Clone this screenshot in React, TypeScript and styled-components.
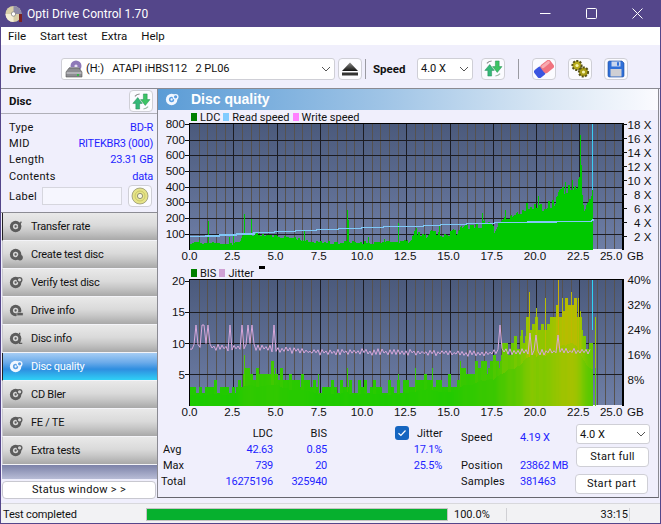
import React from "react";
import styled, { createGlobalStyle } from "styled-components";

const UI = `"Roboto", "Noto Sans", "Liberation Sans", sans-serif`;

const Global = createGlobalStyle`
  html, body { margin: 0; padding: 0; background: #54468a; }
  * { box-sizing: border-box; }
  #root { width: 661px; height: 524px; overflow: hidden; }
`;

/* ---------- data for the charts ---------- */
function rng(seed: number) {
  return () => {
    seed = (seed + 0x6d2b79f5) | 0;
    let t = Math.imul(seed ^ (seed >>> 15), 1 | seed);
    t = (t + Math.imul(t ^ (t >>> 7), 61 | t)) ^ t;
    return ((t ^ (t >>> 14)) >>> 0) / 4294967296;
  };
}
function interp(pts: number[][], x: number) {
  if (x <= pts[0][0]) return pts[0][1];
  for (let i = 1; i < pts.length; i++) {
    if (x <= pts[i][0]) {
      const [a, b] = pts[i - 1];
      const [c, d] = pts[i];
      return b + ((d - b) * (x - a)) / (c - a || 1);
    }
  }
  return pts[pts.length - 1][1];
}
const X0 = 190;
const PX = 17.3;
const COLS = 403;
const gbx = (g: number) => X0 + g * PX;

const ldcEnv = [[0,5],[.2,7],[1,6.5],[2.4,6],[2.9,8],[3.05,15],[4,15],[5,13],[6.3,11],[6.6,8],[8,7],[10,7],[12,7.5],[12.5,8],[12.8,12],[13,16],[13.5,13],[14,19],[14.4,15],[15,16],[15.5,19],[16,24],[17.3,25],[17.55,19],[17.8,26],[18.2,33],[19,36],[19.6,43],[20.8,45],[21,46],[21.4,58],[22.4,66],[22.55,70],[22.75,37],[23,45],[23.2,56],[23.45,58]];
const ldcSpikes: Record<number, number> = { .5:10, 1.02:29, 2.25:13, 2.5:15, 3.1:36, 3.52:31, 6.6:19, 9.1:40, 9.16:30, 10.3:13, 11.2:11, 12:27, 13.05:22, 14.4:24, 16.9:37, 17:30, 18.2:40, 19.5:47, 20.1:54, 21.7:68, 22.1:70, 22.55:115, 22.62:85 };
const ldc: number[] = [];
{
  const r = rng(11);
  let hold = 0;
  for (let i = 0; i < COLS; i++) {
    const g = i / PX;
    const e = interp(ldcEnv, g);
    if (i % 2 === 0) hold = (r() - 0.5) * (g > 19 ? 11 : g > 12.5 ? 7 : 3);
    ldc.push(Math.max(2, e + hold));
  }
  Object.entries(ldcSpikes).forEach(([g, h]) => {
    ldc[Math.round(+g * PX)] = h;
  });
}
const ldcPath = ldc.map((h, i) => `M${X0 + i} 249.5v${-h}h1v${h}z`).join("");

const readPts = [[0,236.8],[.9,236],[1.7,235],[2.7,234],[3.7,232.8],[4.9,231.8],[6.1,230.6],[7.3,229.6],[8.6,228.6],[9.9,227.6],[11.2,226.5],[13.5,225.7],[14.5,224.6],[16,223.8],[17.6,222.8],[19.5,222],[21.2,221.3],[23.2,220.3],[23.3,219]];
const readPath = readPts.map(([g, y], i) => (i === 0 ? `M${gbx(g)} ${y}` : `H${gbx(g)}V${y}`)).join("");

const bisEnv = [[0,2.5],[3,3],[3.05,5.5],[5,5.5],[5.5,4.5],[6.6,4],[7,3],[13,3],[14,4],[15.5,4],[15.6,5],[16.5,6],[17.4,6.5],[17.9,7],[18,10],[19,10],[19.5,13],[20.9,13],[21,15],[22.5,16],[22.7,10.5],[23.3,11],[23.45,11]];
const bisSpikes: Record<number, number> = { 3.1:8, 4.9:6, 7.4:5, 9.1:6, 12:5, 13:6, 14:6, 15.6:7, 19.6:18, 20:15.5, 20.5:17, 21.25:20, 21.5:17, 22:18, 22.4:17, 23.42:14 };
const bis: number[] = [];
{
  const r = rng(5);
  let hold = 3;
  for (let i = 0; i < COLS; i++) {
    const g = i / PX;
    const e = interp(bisEnv, g);
    if (i % 3 === 0) hold = (r() - 0.5) * (g > 18 ? 3.5 : 2.2);
    bis.push(Math.max(1, Math.round(e + hold)));
  }
  Object.entries(bisSpikes).forEach(([g, h]) => {
    bis[Math.round(+g * PX)] = h;
  });
}
function mix(t: number) {
  const stops = [[0,[10,204,0]],[.33,[60,200,0]],[.6,[130,200,0]],[.8,[176,192,0]],[1,[205,175,0]]] as [number, number[]][];
  const v = Math.min(1, Math.max(0, t));
  for (let i = 1; i < stops.length; i++) {
    if (v <= stops[i][0]) {
      const f = (v - stops[i - 1][0]) / (stops[i][0] - stops[i - 1][0]);
      const a = stops[i - 1][1];
      const b = stops[i][1];
      return `rgb(${a.map((c, k) => Math.round(c + (b[k] - c) * f)).join(",")})`;
    }
  }
  return "rgb(205,175,0)";
}
const UNIT = 6.3;
const bisBars = bis.map((h, i) => {
  let s = 0;
  let n = 0;
  for (let k = Math.max(0, i - 6); k <= Math.min(COLS - 1, i + 6); k++) {
    s += bis[k];
    n++;
  }
  const avg = s / n;
  return { x: X0 + i, h: h * UNIT, low: Math.min(h, avg * 0.6) * UNIT, top: mix(Math.max(h, avg) / 20), bottom: mix(avg / 22) };
});

const jitPts: string[] = [];
{
  const r = rng(23);
  const spikes: Record<number, number> = { .4:325, .7:325, .8:325, 1.02:325, 2.3:325, 3.0:325, 3.3:325, 3.55:325, 4.9:325, 17.9:325, 19.6:333, 20:335, 21.3:335 };
  const base = [[0,350],[.3,346],[1.5,347],[2.4,349],[3,346],[5,349],[7,352],[10,352],[13,352],[17,354],[17.8,352],[18,351],[20,352],[23.3,351]];
  const spikeAt: Record<number, number> = {};
  Object.entries(spikes).forEach(([g, y]) => { spikeAt[Math.round(+g * PX / 2)] = y; });
  const n = Math.floor((23.3 * PX) / 2);
  for (let i = 0; i < n; i++) {
    const g = (i * 2) / PX;
    const zig = (i % 2 ? 1 : -1) * (0.6 + r() * 2.8);
    const y = spikeAt[i] ?? interp(base, g) + zig;
    jitPts.push(`${X0 + i * 2},${y.toFixed(1)}`);
  }
}

/* ---------- layout ---------- */
const Windowed = styled.div`
  width: 661px;
  height: 524px;
  display: flex;
  flex-direction: column;
  background: #f0effc;
  border: 1px solid #54468a;
  border-top: 0;
  font: 11px ${UI};
  color: #111;
`;
const TitleBar = styled.div`
  height: 27px;
  margin: 0 -1px;
  background: #54468a;
  color: #fff;
  display: flex;
  align-items: center;
  padding: 0 1px 0 5px;
  flex: none;
`;
const TitleText = styled.span`
  margin-left: 4px;
  font-size: 12px;
  letter-spacing: 0.05px;
  flex: 1;
`;
const WinBtn = styled.span`
  width: 46px;
  height: 27px;
  display: flex;
  align-items: center;
  justify-content: center;
`;
const MenuBar = styled.div`
  height: 18px;
  background: #fff;
  display: flex;
  align-items: center;
  padding-left: 7px;
  gap: 14px;
  flex: none;
`;
const MenuItem = styled.span`
  font-size: 11.5px;
`;
const Toolbar = styled.div`
  height: 43px;
  display: flex;
  align-items: center;
  padding: 4px 0 0 8px;
  flex: none;
`;
const BoldLabel = styled.span<{ $w: number }>`
  width: ${(p) => p.$w}px;
  font-weight: 700;
  font-size: 11.5px;
  flex: none;
`;
const Combo = styled.div<{ $w: number; $h?: number }>`
  width: ${(p) => p.$w}px;
  height: ${(p) => p.$h ?? 22}px;
  flex: none;
  background: #fff;
  border: 1px solid #cfcfd6;
  border-radius: 3px;
  display: flex;
  align-items: center;
  padding: 0 3px 0 3px;
  gap: 3px;
`;
const ComboText = styled.span`
  flex: 1;
  white-space: pre;
`;
const IconBtn = styled.button<{ $ml?: number }>`
  width: 24px;
  height: 22px;
  flex: none;
  margin-left: ${(p) => p.$ml ?? 0}px;
  padding: 0;
  background: #fbfbff;
  border: 1px solid #cfcfd6;
  border-radius: 4px;
  display: flex;
  align-items: center;
  justify-content: center;
`;
const VSep = styled.span<{ $ml: number; $mr: number }>`
  width: 1px;
  height: 20px;
  flex: none;
  margin: 0 ${(p) => p.$mr}px 0 ${(p) => p.$ml}px;
  background: #9a9aa2;
`;
const Body = styled.div`
  flex: 1;
  display: flex;
  min-height: 0;
  border-top: 1px solid #8a8a92;
`;
const Sidebar = styled.div`
  width: 156px;
  flex: none;
  display: flex;
  flex-direction: column;
`;
const DiscHead = styled.div`
  height: 25px;
  padding: 0 4px 0 8px;
  display: flex;
  align-items: center;
  justify-content: space-between;
  border-bottom: 1px solid #b0b0b8;
`;
const DiscGrid = styled.div`
  display: grid;
  grid-template-columns: auto 1fr;
  grid-auto-rows: 16.4px;
  align-items: center;
  padding: 5px 4px 0 8px;
  letter-spacing: 0.3px;
`;
const Blue = styled.span<{ $right?: boolean }>`
  color: #1f1fff;
  letter-spacing: -0.25px;
  ${(p) => (p.$right ? "text-align: right;" : "")}
`;
const LabelRow = styled.div`
  display: flex;
  align-items: center;
  padding: 0 4px 3px 8px;
  height: 26px;
  letter-spacing: 0.3px;
`;
const LabelInput = styled.div`
  width: 80px;
  height: 18px;
  margin: 0 6px 0 5px;
  background: #f6f6fe;
  border: 1px solid #d6d6de;
`;
const NavList = styled.div`
  display: flex;
  flex-direction: column;
  margin-top: 1px;
  border-top: 1px solid #8c8c94;
`;
const NavButton = styled.div<{ $active?: boolean; $edge?: boolean }>`
  height: 28px;
  margin-left: 1px;
  display: flex;
  align-items: center;
  gap: 7px;
  padding-left: 6px;
  letter-spacing: -0.25px;
  border-left: 1px solid ${(p) => (p.$edge ? "#222" : "#c8c8cc")};
  border-bottom: 1px solid #f4f4f8;
  color: ${(p) => (p.$active ? "#fff" : "#111")};
  background: ${(p) =>
    p.$active
      ? "linear-gradient(#a6cdf4 0%, #6cabea 35%, #2f8ee0 60%, #2fd0f6 100%)"
      : "linear-gradient(#e9e9e9 0%, #dadada 45%, #c6c6c6 70%, #a8a8a8 100%)"};
`;
const NavFill = styled.div`
  height: 14px;
  margin-left: 1px;
  background: linear-gradient(#7c82a8, #b8bcd6);
`;
const StatusBtn = styled.div`
  height: 18px;
  margin: 2px 1px 0 1px;
  background: #fff;
  border: 1px solid #c8c8d0;
  border-radius: 4px;
  text-align: center;
  line-height: 16px;
  letter-spacing: 0.3px;
`;
const Main = styled.div`
  flex: 1;
  min-width: 0;
  margin: 0 1px 5px 0;
  border-left: 1px solid #8a8a92;
  border-right: 1px solid #8a8a92;
  border-bottom: 1px solid #66666e;
  display: flex;
  flex-direction: column;
`;
const Header = styled.div`
  height: 21px;
  flex: none;
  display: flex;
  align-items: center;
  gap: 11px;
  padding: 0 0 1px 7px;
  color: #fff;
  font-weight: 700;
  font-size: 14px;
  font-family: "Liberation Sans", sans-serif;
  background: linear-gradient(90deg, #5b9cd6 0%, #9fc4e6 45%, #d9e7f4 78%, #fbfbff 100%);
`;
const Legend = styled.div<{ $mt?: number }>`
  height: 13px;
  flex: none;
  margin-top: ${(p) => p.$mt ?? 0}px;
  display: flex;
  align-items: center;
  padding: 1px 0 0 33px;
`;
const Swatch = styled.span<{ $c: string }>`
  width: 6px;
  height: 8px;
  background: ${(p) => p.$c};
  margin-right: 3px;
`;
const LegendText = styled.span`
  margin-right: 3px;
`;
const FlatMark = styled.span`
  width: 6px;
  height: 3px;
  background: #000;
  margin: -11px 0 0 2px;
`;
const ChartSvg = styled.svg`
  display: block;
  flex: none;
  overflow: visible;
  text {
    font: 11.6px "Liberation Sans", sans-serif;
    fill: #111;
  }
`;
const Stats = styled.div`
  flex: 1;
  display: flex;
  padding: 4px 0 0 3px;
`;
const StatTable = styled.div`
  width: 166px;
  flex: none;
  display: grid;
  grid-template-columns: 40px 72px 54px;
  grid-auto-rows: 16px;
  align-items: center;
`;
const Cell = styled.span<{ $blue?: boolean; $right?: boolean; $indent?: number }>`
  color: ${(p) => (p.$blue ? "#1f1fff" : "#111")};
  text-align: ${(p) => (p.$right ? "right" : "left")};
  padding-left: ${(p) => p.$indent ?? 0}px;
  ${(p) => (p.$blue ? "letter-spacing: -0.25px;" : "")}
`;
const JitterCol = styled.div`
  width: 47px;
  flex: none;
  margin-left: 68px;
  display: grid;
  grid-auto-rows: 16px;
  align-items: center;
  justify-items: end;
`;
const CheckRow = styled.div`
  width: 75px;
  margin-right: -28px;
  display: flex;
  align-items: center;
  gap: 8px;
  justify-self: start;
`;
const CheckBox = styled.span`
  width: 14px;
  height: 14px;
  background: #1565c0;
  border-radius: 3px;
  display: flex;
  align-items: center;
  justify-content: center;
`;
const InfoGrid = styled.div`
  width: 115px;
  flex: none;
  margin-left: 19px;
  padding-top: 4px;
  display: grid;
  grid-template-columns: 59px 1fr;
  grid-template-rows: 16px 12px 16px 16px;
  align-items: center;
  white-space: nowrap;
  letter-spacing: 0.2px;
`;
const Actions = styled.div`
  width: 74px;
  flex: none;
  margin-top: -1px;
  display: flex;
  flex-direction: column;
`;
const ActionBtn = styled.div<{ $mt: number; $ml?: number }>`
  width: 73px;
  height: 20px;
  margin: ${(p) => p.$mt}px 0 0 ${(p) => p.$ml ?? 0}px;
  background: #fff;
  border: 1px solid #cfcfd6;
  border-radius: 4px;
  text-align: center;
  line-height: 18px;
  letter-spacing: 0.3px;
`;
const StatusBar = styled.div`
  height: 20px;
  flex: none;
  background: #f2f2f4;
  border-top: 1px solid #d8d8dc;
  display: flex;
  align-items: center;
  padding: 2px 0 0 2px;
`;
const StatusText = styled.span`
  width: 143px;
  flex: none;
  letter-spacing: -0.15px;
`;
const Progress = styled.div`
  width: 302px;
  height: 13px;
  flex: none;
  background: #dadada;
  border: 1px solid #c4c4c4;
`;
const ProgressFill = styled.div`
  height: 100%;
  background: #06b02e;
`;
const Percent = styled.span`
  width: 53px;
  flex: none;
  margin-left: 6px;
  border-right: 1px solid #d0d0d4;
`;
const TimeText = styled.span`
  width: 123px;
  flex: none;
  text-align: right;
  padding-right: 1px;
  border-right: 1px solid #d0d0d4;
`;

/* ---------- drawn icons ---------- */
const Chevron = () => (
  <svg width="10" height="6" viewBox="0 0 10 6"><path d="M1 1l4 4 4-4" fill="none" stroke="#555" strokeWidth="1" /></svg>
);
const AppIcon = () => (
  <svg width="18" height="18" viewBox="0 0 18 18">
    <circle cx="8.5" cy="9" r="8" fill="#d8cfa8" />
    <path d="M8.5 1a8 8 0 0 1 8 8H8.5z" fill="#8d8aa8" />
    <path d="M8.5 9h-8a8 8 0 0 0 8 8z" fill="#f4eed6" />
    <circle cx="8.5" cy="9" r="2.2" fill="#fff" stroke="#777" strokeWidth=".7" />
    <rect x="14" y="9" width="3" height="8" fill="#7a2020" />
  </svg>
);
const DriveIcon = () => (
  <svg width="18" height="18" viewBox="0 0 18 18">
    <circle cx="11" cy="6" r="5.5" fill="#8e79b8" />
    <circle cx="11" cy="6" r="1.6" fill="#e8e0f6" />
    <path d="M4 7h10v2H4z" fill="#b8b8c0" />
    <path d="M4 8L1 12v5h16v-5l-3-4z" fill="#8d8d92" stroke="#555" strokeWidth=".6" />
    <rect x="1.5" y="12.5" width="15" height="1" fill="#d8d8dc" />
    <circle cx="13" cy="15" r="1.1" fill="#26c23a" />
  </svg>
);
const RefreshIcon = () => (
  <svg width="19" height="17" viewBox="0 0 20 18">
    <path d="M3 3.500a7 7 0 0 1 5-2.500" fill="none" stroke="#8a8a8a" strokeWidth="1.200" />
    <path d="M17 14.500a7 7 0 0 1-5 2.500" fill="none" stroke="#9ab8a4" strokeWidth="1.200" />
    <path d="M4 17v-6H.8L6 4.800 10.800 11H8v6z" fill="#34b878" stroke="#1d8450" strokeWidth=".5" />
    <path d="M12 1v6H9l5 6.200L19 7h-3V1z" fill="#3cc464" stroke="#1d8450" strokeWidth=".5" />
  </svg>
);
const EjectIcon = () => (
  <svg width="18" height="16" viewBox="0 0 18 16">
    <defs><linearGradient id="ej" x1="0" y1="0" x2="0" y2="1"><stop offset="0" stopColor="#8a8a8a" /><stop offset="1" stopColor="#111" /></linearGradient></defs>
    <path d="M9 1.500L17 10H1z" fill="url(#ej)" />
    <rect x="1" y="11.500" width="16" height="3" fill="#333" />
  </svg>
);
const EraserIcon = () => (
  <svg width="20" height="18" viewBox="0 0 20 18">
    <g transform="rotate(-38 10 9)">
      <rect x="0" y="4" width="9" height="10" rx="2.500" fill="#3b55e0" />
      <rect x="8" y="4" width="12" height="10" rx="2.500" fill="#f0737f" />
      <rect x="9" y="5" width="10" height="3" rx="1.500" fill="#f8aab0" />
    </g>
  </svg>
);
const GearsIcon = () => (
  <svg width="20" height="19" viewBox="0 0 20 19">
    <circle cx="7" cy="6.500" r="4.600" fill="#b9ad1c" stroke="#55501a" strokeWidth="2" strokeDasharray="2 1.400" />
    <circle cx="7" cy="6.500" r="1.600" fill="#f6f4b0" />
    <circle cx="13.500" cy="13" r="4.600" fill="#a89c16" stroke="#55501a" strokeWidth="2" strokeDasharray="2 1.400" />
    <circle cx="13.500" cy="13" r="1.600" fill="#f6f4b0" />
  </svg>
);
const SaveIcon = () => (
  <svg width="18" height="18" viewBox="0 0 18 18">
    <path d="M1 2.500A1.500 1.500 0 0 1 2.500 1H15l2 2v12.500a1.500 1.500 0 0 1-1.500 1.500h-13A1.500 1.500 0 0 1 1 15.500z" fill="#2f6fd8" stroke="#1c4aa0" strokeWidth=".6" />
    <rect x="4.500" y="1.500" width="9" height="5" fill="#c9d6ee" />
    <rect x="10" y="2.200" width="2" height="3.500" fill="#2f6fd8" />
    <rect x="3.500" y="9" width="11" height="7.500" fill="#cfcfd4" />
  </svg>
);
const CdIcon = () => (
  <svg width="18" height="18" viewBox="0 0 18 18">
    <circle cx="9" cy="9" r="8" fill="#e6e488" stroke="#87876a" strokeWidth=".7" />
    <circle cx="9" cy="9" r="5" fill="none" stroke="#c2bf62" strokeWidth=".8" />
    <circle cx="9" cy="9" r="2.600" fill="#f8f8e4" stroke="#7a7a62" strokeWidth=".8" />
  </svg>
);
const NavIcon = ({ kind, light }: { kind: string; light?: boolean }) => {
  const c = light ? "#f2f7ff" : "#5c5c5c";
  const hole = light ? "#5a9fe4" : "#d6d6d6";
  return (
    <svg width="15" height="15" viewBox="0 0 17 17" style={{ flex: "none" }}>
      <circle cx="7.500" cy="8.500" r="6.500" fill={c} />
      <circle cx="7.500" cy="8.500" r="3" fill={hole} />
      <circle cx="7.500" cy="8.500" r="1.300" fill={c} />
      {kind === "bolt" && <path d="M14 3l-3 5h2l-2 5" fill="none" stroke={c} strokeWidth="1.400" />}
      {kind === "drop" && <circle cx="12.500" cy="12" r="3.200" fill={c} />}
      {kind === "gear" && <circle cx="12" cy="5.500" r="2.600" fill={hole} stroke={c} strokeWidth="1.500" />}
      {kind === "bar" && <rect x="9" y="11" width="7" height="3.500" fill={c} stroke={hole} strokeWidth=".6" />}
      {kind === "info" && <path d="M12 2v2M12 6v8h3" stroke={c} strokeWidth="1.500" fill="none" />}
    </svg>
  );
};

/* ---------- charts ---------- */
const xLabels = ["0.0", "2.5", "5.0", "7.5", "10.0", "12.5", "15.0", "17.5", "20.0", "22.5"];
const PlotFrame = ({ id, top, bottom, hLines }: { id: string; top: number; bottom: number; hLines: number[] }) => {
  const minors: number[] = [];
  const majors: number[] = [];
  for (let i = 1; i <= 50; i++) (i % 5 === 0 ? majors : minors).push(Math.round(X0 + i * 8.65) + 0.5);
  return (
    <>
      <defs>
        <linearGradient id={id} x1="0" y1="0" x2="0" y2="1">
          <stop offset="0" stopColor="#4b5a7c" />
          <stop offset="1" stopColor="#6e7ea6" />
        </linearGradient>
      </defs>
      <rect x={X0} y={top} width={433} height={bottom - top} fill={`url(#${id})`} />
      {minors.map((x) => <line key={x} x1={x} x2={x} y1={top} y2={bottom} stroke="#56524f" />)}
      {hLines.map((y) => <line key={y} x1={X0} x2={623} y1={y + 0.5} y2={y + 0.5} stroke="#1c1c22" />)}
      {majors.map((x) => <line key={x} x1={x} x2={x} y1={top} y2={bottom} stroke="#1c1c22" />)}
    </>
  );
};
const PlotBorder = ({ top, bottom }: { top: number; bottom: number }) => (
  <path d={`M189.500 ${bottom}V${top - 0.5}H623V${bottom}`} fill="none" stroke="#000" strokeWidth="1.500" />
);
const XAxis = ({ bottom }: { bottom: number }) => (
  <>
    {xLabels.map((t, i) => (
      <text key={t} x={gbx(i * 2.5) - (i === 0 ? 0.5 : 1)} y={bottom + 11} textAnchor="middle">{t}</text>
    ))}
    <text x={622.500} y={bottom + 11} textAnchor="end">25.0</text>
    <text x={627} y={bottom + 11}>GB</text>
  </>
);

const TopChart = () => {
  const left = [800, 700, 600, 500, 400, 300, 200, 100];
  const right = [18, 16, 14, 12, 10, 8, 6, 4, 2];
  const ly = (v: number) => 249.5 - v * 0.157;
  return (
    <ChartSvg width={502} height={142} viewBox="158 123 502 142" shapeRendering="crispEdges">
      <PlotFrame id="pg1" top={124} bottom={249} hLines={left.slice(1).map((v) => Math.round(ly(v)))} />
      <line x1="592.500" x2="592.500" y1="124" y2="200" stroke="#3ccdf2" />
      <path d={ldcPath} fill="#00c800" />
      <path d={readPath} fill="none" stroke="#80c8f6" strokeWidth="1.200" />
      <PlotBorder top={124} bottom={250} />
      {left.map((v) => (
        <g key={v}>
          <line x1="185" x2="190" y1={Math.round(ly(v)) + 0.5} y2={Math.round(ly(v)) + 0.5} stroke="#111" />
          <text x={185} y={ly(v) + 4} textAnchor="end" shapeRendering="auto">{v}</text>
        </g>
      ))}
      {right.map((v, i) => (
        <g key={v}>
          <line x1="622" x2="627" y1={124.500 + i * 14} y2={124.500 + i * 14} stroke="#111" />
          <text x={v >= 10 ? 627.500 : 634} y={128.500 + i * 14}>{v} X</text>
        </g>
      ))}
      <XAxis bottom={249} />
    </ChartSvg>
  );
};
const BottomChart = () => {
  const left: [number, number][] = [[20, 281], [15, 312], [10, 343.500], [5, 374.500]];
  const right: [string, number][] = [["40%", 284], ["32%", 309], ["24%", 334], ["16%", 359], ["8%", 384]];
  return (
    <ChartSvg width={502} height={142} viewBox="158 279 502 142" shapeRendering="crispEdges">
      <PlotFrame id="pg2" top={280} bottom={405} hLines={[312, 343, 374]} />
      <line x1="592.500" x2="592.500" y1="280" y2="330" stroke="#2fd4f4" />
      {bisBars.map((b) => (
        <g key={b.x}>
          <rect x={b.x} y={405.500 - b.h} width={1} height={b.h} fill={b.top} />
          <rect x={b.x} y={405.500 - b.low} width={1} height={b.low} fill={b.bottom} />
        </g>
      ))}
      <polyline points={jitPts.join(" ")} fill="none" stroke="#d8a8dc" strokeWidth="1" shapeRendering="auto" />
      <PlotBorder top={280} bottom={406} />
      {left.map(([v, y]) => (
        <g key={v}>
          <line x1="185" x2="190" y1={Math.floor(y) + 0.5} y2={Math.floor(y) + 0.5} stroke="#111" />
          <text x={185} y={y + 4} textAnchor="end">{v}</text>
        </g>
      ))}
      {right.map(([t, y]) => <text key={t} x={627.500} y={y}>{t}</text>)}
      <XAxis bottom={405} />
    </ChartSvg>
  );
};

const navItems = [
  { label: "Transfer rate", kind: "bolt", edge: true },
  { label: "Create test disc", kind: "drop" },
  { label: "Verify test disc", kind: "gear" },
  { label: "Drive info", kind: "bar" },
  { label: "Disc info", kind: "info" },
  { label: "Disc quality", kind: "gear", active: true, edge: true },
  { label: "CD Bler", kind: "gear" },
  { label: "FE / TE", kind: "gear" },
  { label: "Extra tests", kind: "gear" },
];
const discRows = [
  ["Type", "BD-R"],
  ["MID", "RITEKBR3 (000)"],
  ["Length", "23.31 GB"],
  ["Contents", "data"],
];

export default function App() {
  return (
    <Windowed>
      <Global />
      <TitleBar>
        <AppIcon />
        <TitleText>Opti Drive Control 1.70</TitleText>
        <WinBtn><svg width="11" height="11" viewBox="0 0 11 11"><path d="M0 5.500h10.500" stroke="#fff" /></svg></WinBtn>
        <WinBtn><svg width="11" height="11" viewBox="0 0 11 11"><rect x=".5" y=".5" width="10" height="10" rx="1" fill="none" stroke="#fff" /></svg></WinBtn>
        <WinBtn><svg width="11" height="11" viewBox="0 0 11 11"><path d="M.5.5l10 10M10.500.5l-10 10" stroke="#fff" /></svg></WinBtn>
      </TitleBar>
      <MenuBar>
        <MenuItem>File</MenuItem>
        <MenuItem>Start test</MenuItem>
        <MenuItem>Extra</MenuItem>
        <MenuItem>Help</MenuItem>
      </MenuBar>
      <Toolbar>
        <BoldLabel $w={52}>Drive</BoldLabel>
        <Combo $w={274}>
          <DriveIcon />
          <ComboText>{"(H:)   ATAPI iHBS112   2 PL06"}</ComboText>
          <Chevron />
        </Combo>
        <IconBtn $ml={3}><EjectIcon /></IconBtn>
        <VSep $ml={3} $mr={7} />
        <BoldLabel $w={44}>Speed</BoldLabel>
        <Combo $w={56}>
          <ComboText>4.0 X</ComboText>
          <Chevron />
        </Combo>
        <IconBtn $ml={8}><RefreshIcon /></IconBtn>
        <VSep $ml={13} $mr={13} />
        <IconBtn><EraserIcon /></IconBtn>
        <IconBtn $ml={12}><GearsIcon /></IconBtn>
        <IconBtn $ml={12}><SaveIcon /></IconBtn>
      </Toolbar>
      <Body>
        <Sidebar>
          <DiscHead>
            <BoldLabel $w={40}>Disc</BoldLabel>
            <IconBtn><RefreshIcon /></IconBtn>
          </DiscHead>
          <DiscGrid>
            {discRows.map(([k, v]) => (
              <React.Fragment key={k}>
                <span>{k}</span>
                <Blue $right>{v}</Blue>
              </React.Fragment>
            ))}
          </DiscGrid>
          <LabelRow>
            <span>Label</span>
            <LabelInput />
            <IconBtn><CdIcon /></IconBtn>
          </LabelRow>
          <NavList>
            {navItems.map((n) => (
              <NavButton key={n.label} $active={n.active} $edge={n.edge}>
                <NavIcon kind={n.kind} light={n.active} />
                {n.label}
              </NavButton>
            ))}
          </NavList>
          <NavFill />
          <StatusBtn>{"Status window > >"}</StatusBtn>
        </Sidebar>
        <Main>
          <Header>
            <NavIcon kind="gear" light />
            Disc quality
          </Header>
          <Legend>
            <Swatch $c="#008000" /><LegendText>LDC</LegendText>
            <Swatch $c="#80ccff" /><LegendText>Read speed</LegendText>
            <Swatch $c="#ff80ff" /><LegendText>Write speed</LegendText>
          </Legend>
          <TopChart />
          <Legend $mt={1}>
            <Swatch $c="#008000" /><LegendText>BIS</LegendText>
            <Swatch $c="#d0a0d4" /><LegendText>Jitter</LegendText>
            <FlatMark />
          </Legend>
          <BottomChart />
          <Stats>
            <StatTable>
              <span /><Cell $right>LDC</Cell><Cell $right>BIS</Cell>
              <Cell $indent={2}>Avg</Cell><Cell $blue $right>42.63</Cell><Cell $blue $right>0.85</Cell>
              <Cell $indent={2}>Max</Cell><Cell $blue $right>739</Cell><Cell $blue $right>20</Cell>
              <Cell>Total</Cell><Cell $blue $right>16275196</Cell><Cell $blue $right>325940</Cell>
            </StatTable>
            <JitterCol>
              <CheckRow>
                <CheckBox>
                  <svg width="10" height="10" viewBox="0 0 10 10"><path d="M1.500 5.200l2.400 2.300 4.600-5" fill="none" stroke="#fff" strokeWidth="1.200" /></svg>
                </CheckBox>
                Jitter
              </CheckRow>
              <Blue>17.1%</Blue>
              <Blue>25.5%</Blue>
            </JitterCol>
            <InfoGrid>
              <span>Speed</span><Blue>4.19 X</Blue>
              <span /><span />
              <span>Position</span><Blue>23862 MB</Blue>
              <span>Samples</span><Blue>381463</Blue>
            </InfoGrid>
            <Actions>
              <Combo $w={74} $h={20}>
                <ComboText>4.0 X</ComboText>
                <Chevron />
              </Combo>
              <ActionBtn $mt={3}>Start full</ActionBtn>
              <ActionBtn $mt={7} $ml={-1}>Start part</ActionBtn>
            </Actions>
          </Stats>
        </Main>
      </Body>
      <StatusBar>
        <StatusText>Test completed</StatusText>
        <Progress><ProgressFill style={{ width: "100%" }} /></Progress>
        <Percent>100.0%</Percent>
        <TimeText>33:15</TimeText>
      </StatusBar>
    </Windowed>
  );
}
